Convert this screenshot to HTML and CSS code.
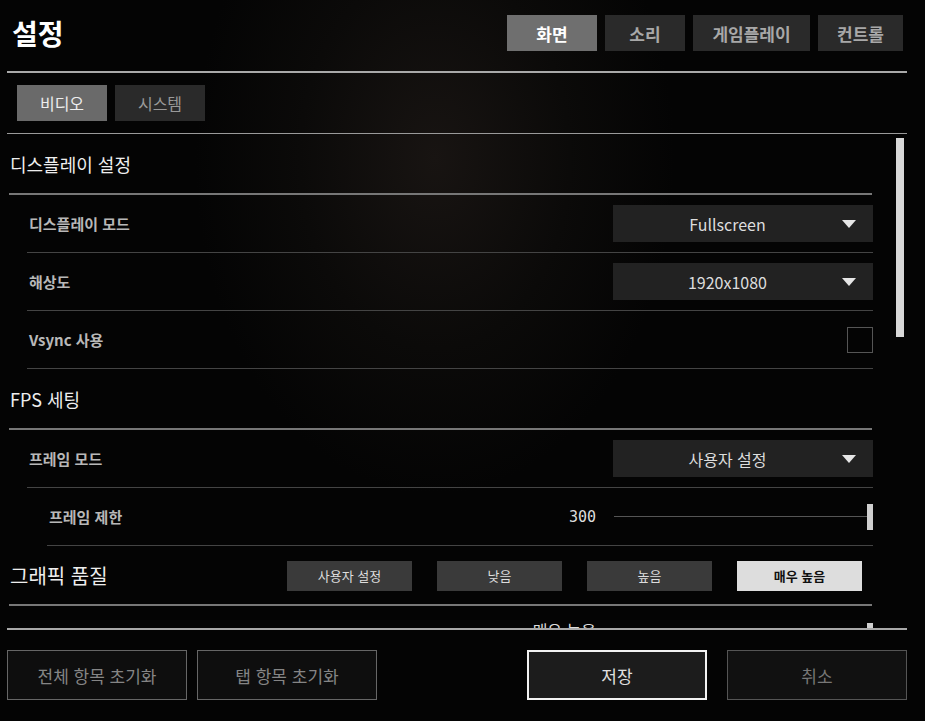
FILE: index.html
```html
<!DOCTYPE html>
<html lang="ko">
<head>
    <meta charset="UTF-8">
    <meta name="viewport" content="width=device-width, initial-scale=1.0">
    <title>설정</title>
    <link rel="stylesheet" href="styles.css">
</head>
<body>
    <div class="settings">
        <!-- 상단 제목 + 메인 탭 -->
        <header class="top-bar">
            <h1 class="title">설정</h1>
            <nav class="main-tabs">
                <button class="main-tab active">화면</button>
                <button class="main-tab">소리</button>
                <button class="main-tab">게임플레이</button>
                <button class="main-tab">컨트롤</button>
            </nav>
        </header>

        <!-- 하위 탭 -->
        <div class="sub-tabs">
            <button class="sub-tab active">비디오</button>
            <button class="sub-tab">시스템</button>
        </div>

        <!-- 스크롤 영역 -->
        <div class="scroll-area">
            <div class="scroll-content">
                <div class="section-head">디스플레이 설정</div>
                <div class="row">
                    <span class="label">디스플레이 모드</span>
                    <div class="dropdown"><span class="dd-text">Fullscreen</span><span class="dd-arrow"></span></div>
                </div>
                <div class="row">
                    <span class="label">해상도</span>
                    <div class="dropdown"><span class="dd-text">1920x1080</span><span class="dd-arrow"></span></div>
                </div>
                <div class="row">
                    <span class="label">Vsync 사용</span>
                    <span class="checkbox"></span>
                </div>

                <div class="section-head">FPS 세팅</div>
                <div class="row">
                    <span class="label">프레임 모드</span>
                    <div class="dropdown"><span class="dd-text">사용자 설정</span><span class="dd-arrow"></span></div>
                </div>
                <div class="row sub-row">
                    <span class="label">프레임 제한</span>
                    <div class="slider">
                        <span class="slider-value">300</span>
                        <div class="slider-track"><span class="slider-thumb"></span></div>
                    </div>
                </div>

                <div class="section-head quality">
                    <span class="quality-title">그래픽 품질</span>
                    <div class="presets">
                        <button class="preset">사용자 설정</button>
                        <button class="preset">낮음</button>
                        <button class="preset">높음</button>
                        <button class="preset active">매우 높음</button>
                    </div>
                </div>
                <div class="row peek-row">
                    <span class="label"></span>
                    <div class="slider">
                        <span class="slider-value ko">매우 높음</span>
                        <div class="slider-track"><span class="slider-thumb"></span></div>
                    </div>
                </div>
            </div>
            <div class="scrollbar"></div>
        </div>

        <!-- 하단 버튼 -->
        <footer class="bottom-bar">
            <button class="foot-btn">전체 항목 초기화</button>
            <button class="foot-btn">탭 항목 초기화</button>
            <span class="spacer"></span>
            <button class="foot-btn save">저장</button>
            <button class="foot-btn cancel">취소</button>
        </footer>
    </div>
</body>
</html>
```

FILE: styles.css
```css
body {
    margin: 0;
    width: 925px;
    height: 721px;
    overflow: hidden;
    background: radial-gradient(ellipse 300px 420px at 47% 22%, #181412 0%, #0b0a09 45%, #040404 80%);
    background-color: #040404;
    color: #ddd;
    font-family: "Noto Sans CJK KR", "Noto Sans", sans-serif;
}
button {
    font-family: inherit;
    border: none;
    cursor: pointer;
    padding: 0;
}
.settings {
    width: 900px;
    margin-left: 7px;
    display: flex;
    flex-direction: column;
}
/* 상단 */
.top-bar {
    height: 71px;
    display: flex;
    align-items: flex-start;
    justify-content: space-between;
    border-bottom: 2px solid #a9a9a9;
}
.title {
    margin: 13px 0 0 5px;
    font-size: 28px;
    line-height: 40px;
    font-weight: 700;
    color: #fff;
}
.main-tabs {
    display: flex;
    gap: 8px;
    margin-top: 15px;
    margin-right: 4px;
}
.main-tab {
    height: 36px;
    background: #2a2a2a;
    color: #a8a8a8;
    font-size: 17px;
    font-weight: 700;
    width: 80px;
}
.main-tab:nth-child(1) { width: 90px; }
.main-tab:nth-child(3) { width: 117px; }
.main-tab:nth-child(4) { width: 85px; }
.main-tab.active {
    background: #6f6f6f;
    color: #fff;
}
/* 하위 탭 */
.sub-tabs {
    height: 48px;
    padding: 12px 0 0 10px;
    display: flex;
    align-items: flex-start;
    gap: 8px;
    border-bottom: 1px solid #9a9a9a;
}
.sub-tab {
    width: 90px;
    height: 36px;
    background: #2a2a2a;
    color: #999;
    font-size: 16px;
}
.sub-tab.active {
    background: #6a6a6a;
    color: #eee;
}
/* 스크롤 영역 */
.scroll-area {
    height: 494px;
    overflow: hidden;
    display: flex;
    align-items: flex-start;
}
.scroll-content {
    width: 866px;
    flex-shrink: 0;
}
.scrollbar {
    width: 8px;
    height: 199px;
    margin: 4px 0 0 23px;
    background: #d8d8d8;
}
.section-head {
    height: 59px;
    margin-left: 2px;
    width: 862px;
    border-bottom: 2px solid #777;
    display: flex;
    align-items: center;
    padding-left: 1px;
    box-sizing: content-box;
    font-size: 18px;
    color: #eee;
}
.row {
    height: 57px;
    margin-left: 20px;
    border-bottom: 1px solid #444;
    display: flex;
    align-items: center;
    justify-content: space-between;
    padding-left: 2px;
}
.row.sub-row {
    margin-left: 40px;
}
.label {
    font-size: 15px;
    font-weight: 700;
    color: #b8b8b8;
}
.dropdown {
    width: 260px;
    height: 37px;
    background: #222;
    display: flex;
    align-items: center;
}
.dd-text {
    flex: 1;
    text-align: center;
    font-size: 16px;
    color: #ddd;
}
.dd-arrow {
    width: 0;
    height: 0;
    border-left: 7px solid transparent;
    border-right: 7px solid transparent;
    border-top: 8px solid #e6e6e6;
    margin-right: 17px;
}
.checkbox {
    width: 24px;
    height: 24px;
    border: 1px solid #555;
}
.slider {
    display: flex;
    align-items: center;
}
.slider-value {
    font-family: "DejaVu Sans Mono", "Liberation Mono", monospace;
    font-size: 15px;
    color: #ddd;
    margin-right: 18px;
}
.slider-value.ko {
    font-family: "Noto Sans CJK KR", sans-serif;
    font-size: 16px;
    line-height: 22px;
}
.slider-track {
    width: 259px;
    height: 1px;
    background: #555;
    display: flex;
    justify-content: flex-end;
    align-items: center;
}
.slider-thumb {
    width: 6px;
    height: 26px;
    background: #cfcfcf;
}
.peek-row {
    height: 50px;
    align-items: flex-start;
}
.peek-row .slider {
    margin-top: 13px;
    align-items: flex-start;
}
.peek-row .slider-track {
    margin-top: 4px;
    align-items: flex-start;
    background: transparent;
}
/* 그래픽 품질 */
.section-head.quality {
    height: 58px;
    justify-content: space-between;
}
.quality-title {
    font-size: 20px;
}
.presets {
    display: flex;
    gap: 25px;
    margin-right: 10px;
    margin-top: 1px;
}
.preset {
    width: 125px;
    height: 30px;
    background: #3a3a3a;
    color: #ddd;
    font-size: 13px;
}
.preset.active {
    background: #ddd;
    color: #111;
    font-weight: 700;
}
/* 하단 */
.bottom-bar {
    border-top: 2px solid #a9a9a9;
    padding-top: 20px;
    display: flex;
    gap: 10px;
}
.spacer {
    flex: 1;
}
.foot-btn {
    width: 180px;
    height: 50px;
    box-sizing: border-box;
    background: #0e0e0e;
    border: 1px solid #666;
    color: #858585;
    font-size: 17px;
}
.foot-btn.save {
    border: 2px solid #f2f2f2;
    background: #1c1c1c;
    color: #e0e0e0;
}
.foot-btn.cancel {
    margin-left: 10px;
    border-color: #555;
    background: #111;
    color: #777;
}
```
